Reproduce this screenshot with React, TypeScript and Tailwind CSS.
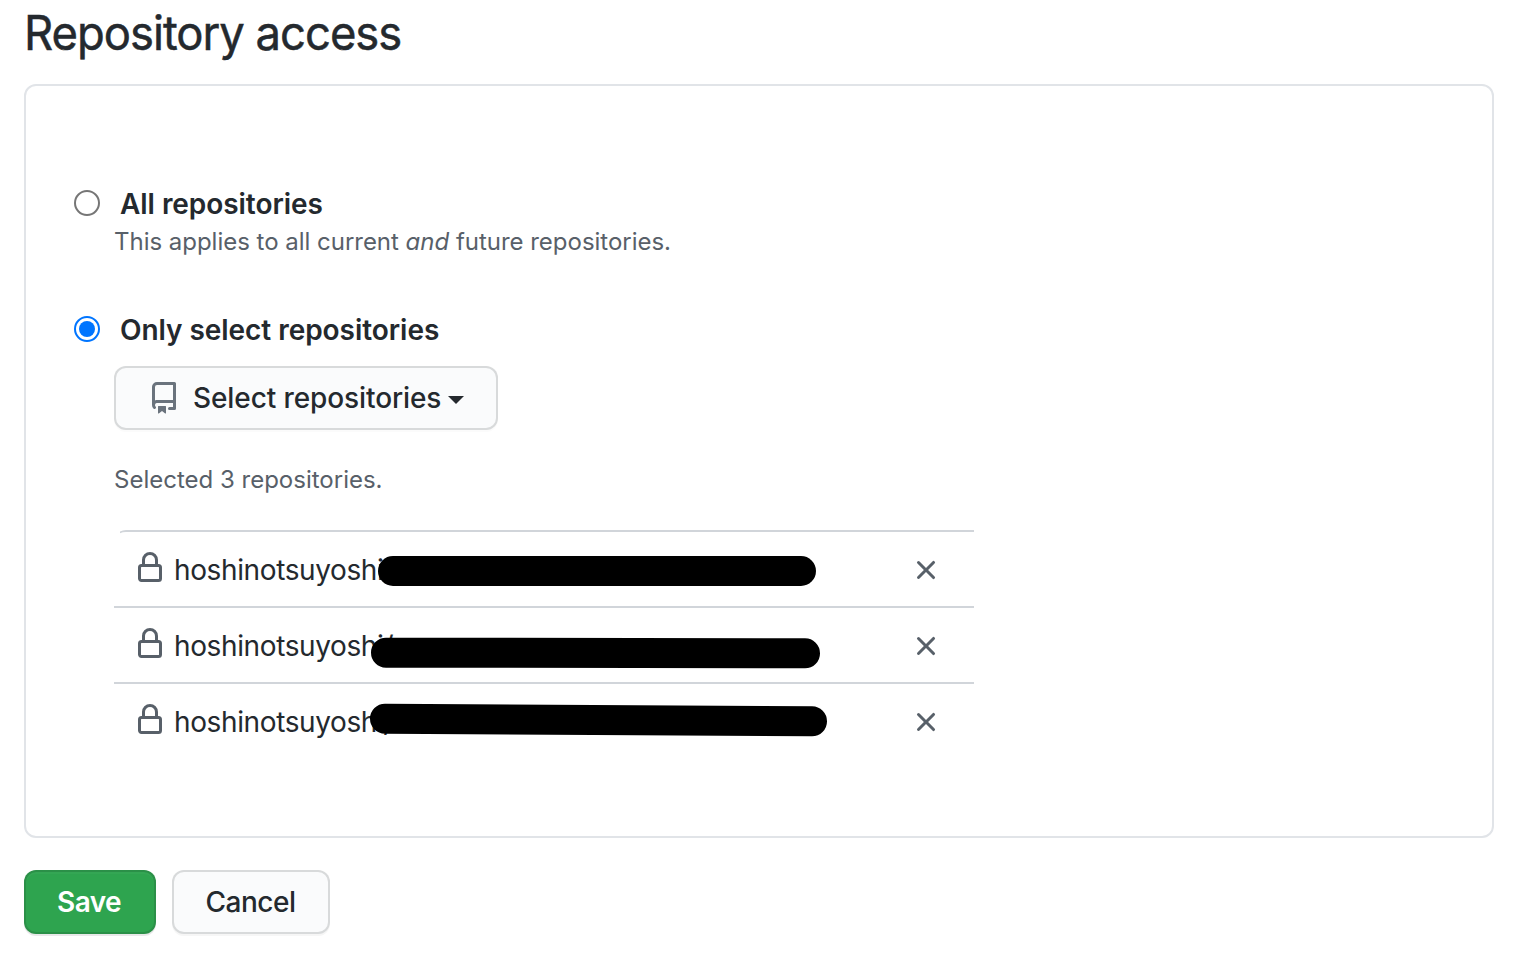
import React from "react";

const LOCK =
  "M4 4v2h-.25A1.75 1.75 0 002 7.75v5.5c0 .966.784 1.75 1.75 1.75h8.5A1.75 1.75 0 0014 13.25v-5.5A1.75 1.75 0 0012.25 6H12V4a4 4 0 10-8 0zm6.5 2V4a2.5 2.5 0 10-5 0v2h5zM12 7.5h.25a.25.25 0 01.25.25v5.5a.25.25 0 01-.25.25h-8.5a.25.25 0 01-.25-.25v-5.5a.25.25 0 01.25-.25H12z";
const REPO =
  "M2 2.5A2.5 2.5 0 014.5 0h8.75a.75.75 0 01.75.75v12.5a.75.75 0 01-.75.75h-2.5a.75.75 0 110-1.5h1.75v-2h-8a1 1 0 00-.714 1.7.75.75 0 01-1.072 1.05A2.495 2.495 0 012 11.5v-9zm10.5-1V9h-8c-.356 0-.694.074-1 .208V2.5a1 1 0 011-1h8zM5 12.25v3.25a.25.25 0 00.4.2l1.45-1.087a.25.25 0 01.3 0L8.6 15.7a.25.25 0 00.4-.2v-3.25a.25.25 0 00-.25-.25h-3.5a.25.25 0 00-.25.25z";
const CLOSE =
  "M3.72 3.72a.75.75 0 011.06 0L8 6.94l3.22-3.22a.75.75 0 111.06 1.06L9.06 8l3.22 3.22a.75.75 0 11-1.06 1.06L8 9.06l-3.22 3.22a.75.75 0 01-1.06-1.06L6.94 8 3.72 4.78a.75.75 0 010-1.06z";

function Icon({ d, className }: { d: string; className: string }) {
  return (
    <svg viewBox="0 0 16 16" fill="currentColor" fillRule="evenodd" className={`size-8 shrink-0 ${className}`}>
      <path d={d} />
    </svg>
  );
}

function Radio({ checked }: { checked?: boolean }) {
  return (
    <span
      role="radio"
      aria-checked={!!checked}
      className={
        checked
          ? "mb-0.5 flex size-[26px] shrink-0 items-center justify-center rounded-full border-2 border-[#0075ff]"
          : "mb-0.5 flex size-[26px] shrink-0 rounded-full border-2 border-[#767676]"
      }
    >
      {checked && <span className="size-4 rounded-full bg-[#0075ff]" />}
    </span>
  );
}

/* Thick marker strokes that hide the repository names. */
const rows = [
  {
    id: 1,
    line: "rounded-tl-xl [clip-path:inset(0_0_0_6px)]",
    mark: "left-[264px] top-[24px] w-[438px]",
  },
  { id: 2, line: "", mark: "left-[257px] top-[30px] w-[449px] rotate-[0.1deg]" },
  { id: 3, line: "", mark: "left-[256px] top-[21px] w-[457px] rotate-[0.35deg]" },
];

export default function App() {
  return (
    <main className="h-[980px] w-[1522px] overflow-hidden bg-white px-6 font-['Inter',sans-serif] text-[28px] leading-[42px] text-[#24292e]">
      <h2 className="h-[84px] origin-left scale-x-[0.945] text-[48px] leading-[65px] tracking-[-1.05px] [-webkit-text-stroke:0.5px_#24292e]">
        Repository access
      </h2>

      <section className="h-[754px] w-[1470px] rounded-xl border-2 border-[#e1e4e8] pl-12 pt-[97px]">
        <div className="flex items-center gap-5">
          <Radio />
          <span className="font-semibold tracking-[-0.05px]">All repositories</span>
        </div>
        <p className="-mt-px ml-10 h-9 text-[24px] leading-[36px] tracking-[-0.02px] text-[#586069]">
          This applies to all current <em>and</em> future repositories.
        </p>

        <div className="mt-[49px] flex items-center gap-5">
          <Radio checked />
          <span className="font-semibold tracking-[-0.05px]">Only select repositories</span>
        </div>
        <div className="ml-10 mt-[15px]">
          <button className="flex h-16 w-[384px] items-center rounded-xl border-2 border-[#1b1f2326] bg-[#fafbfc] pl-8 font-medium shadow-[0_2px_0_rgba(27,31,35,0.02)]">
            <Icon d={REPO} className="text-[#6a737d]" />
            <span className="ml-[13px] whitespace-nowrap tracking-[-0.1px]">Select repositories</span>
            <svg viewBox="0 0 16 8" className="ml-[7px] mt-[3px] h-2 w-4" fill="currentColor">
              <path d="M0 0h16L8 8z" />
            </svg>
          </button>
          <p className="mt-8 h-9 text-[24px] leading-[36px] text-[#586069]">Selected 3 repositories.</p>

          <ul className="mt-8 w-[860px]">
            {rows.map((row) => (
              <li
                key={row.id}
                className={`relative flex h-[76px] items-center border-t-2 border-[#d1d5da] pl-5 pr-8 pt-0.5 ${row.line}`}
              >
                <Icon d={LOCK} className="mb-1 text-[#586069]" />
                <span className="ml-2 tracking-[-0.38px]">hoshinotsuyoshi/</span>
                <Icon d={CLOSE} className="ml-auto text-[#586069]" />
                <span className={`absolute h-[30px] rounded-full bg-black ${row.mark}`} />
              </li>
            ))}
          </ul>
        </div>
      </section>

      <div className="mt-8 flex gap-4">
        <button className="h-16 w-[132px] rounded-xl border-2 border-[#1b1f2326] bg-[#2ea44f] pr-0.5 font-semibold tracking-[-0.6px] text-white shadow-[0_2px_0_rgba(27,31,35,0.1),inset_0_2px_0_rgba(255,255,255,0.03)]">
          Save
        </button>
        <button className="h-16 w-[158px] rounded-xl border-2 border-[#1b1f2326] bg-[#fafbfc] pr-px font-medium tracking-[-0.45px] shadow-[0_2px_0_rgba(27,31,35,0.04)]">
          Cancel
        </button>
      </div>
    </main>
  );
}
